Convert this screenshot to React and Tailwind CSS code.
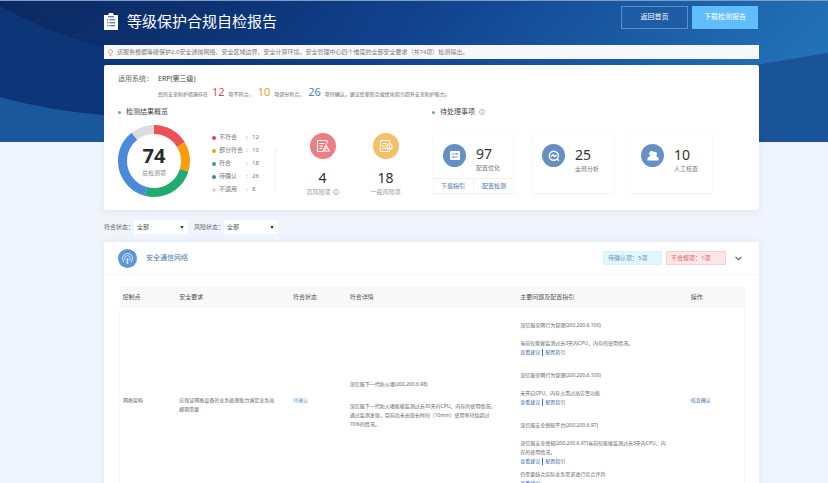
import React from "react";

const legend = [
  { label: "不符合", value: 12, color: "#ea5256" },
  { label: "部分符合", value: 10, color: "#f99d0c" },
  { label: "符合", value: 18, color: "#22ab70" },
  { label: "待确认", value: 26, color: "#4a8ad8" },
  { label: "不适用", value: 8, color: "#dcdcde" },
];

const dots = ["bg-[#d9484f]", "bg-[#f0a015]", "bg-[#2aa775]", "bg-[#3f80b4]", "bg-[#d5dae2]"];

function Backdrop() {
  return (
    <svg className="absolute inset-0 h-full w-full" viewBox="0 0 828 142" preserveAspectRatio="none" aria-hidden="true">
      <defs>
        <linearGradient id="sky" x1="0" x2="1" y1="0" y2="0.15">
          <stop offset="0" stopColor="#0b2a62" />
          <stop offset="0.2" stopColor="#0c2f6d" />
          <stop offset="0.5" stopColor="#11418d" />
          <stop offset="0.78" stopColor="#1a5ba4" />
          <stop offset="1" stopColor="#2270b6" />
        </linearGradient>
      </defs>
      <rect width="828" height="142" fill="url(#sky)" />
      <path d="M0 5C30 22 66 37 104 46L230 66V142H0Z" fill="#0d3679" />
      <path d="M0 97C34 106 68 112 104 115L240 122V142H0Z" fill="#1b589b" />
      <path d="M700 74L759 64L828 52V142H700Z" fill="#1a5498" />
    </svg>
  );
}

function ClipboardIcon() {
  return (
    <svg width="14" height="17" viewBox="0 0 14 17" aria-hidden="true">
      <path d="M0 2H4.500V1.200A1.200 1.200 0 0 1 5.700 0H8.300A1.200 1.200 0 0 1 9.500 1.200V2H14V17H0Z" fill="#fff" />
      <path d="M4 3.800H10M3 6.800H4.200M5.500 6.800H11M3 9.800H4.200M5.500 9.800H11M3 12.800H4.200M5.500 12.800H11" stroke="#274a82" strokeWidth="1" />
    </svg>
  );
}

function Info() {
  return (
    <svg width="6" height="6" viewBox="0 0 12 12" fill="none" stroke="#7d8794" aria-hidden="true">
      <circle cx="6" cy="6" r="5.200" />
      <path d="M6 5V9M6 2.800V4" strokeWidth="1.300" />
    </svg>
  );
}

function Donut() {
  const total = legend.reduce((s, d) => s + d.value, 0);
  const c = 2 * Math.PI * 31.5;
  let start = 0;
  return (
    <div className="relative h-[72px] w-[72px] shrink-0">
      <svg width="72" height="72" viewBox="0 0 72 72" aria-hidden="true">
        <g transform="rotate(-90 36 36)" fill="none" strokeWidth="9">
          {legend.map((d) => {
            const len = (d.value / total) * c;
            const arc = (
              <circle key={d.label} cx="36" cy="36" r="31.5" stroke={d.color} strokeDasharray={`${len} ${c - len}`} strokeDashoffset={-start} />
            );
            start += len;
            return arc;
          })}
        </g>
      </svg>
      <div className="absolute inset-0 flex flex-col items-center pt-[18px]">
        <span className="text-[20px] leading-[26px] font-bold text-[#2b2b2b]">74</span>
        <span className="text-[6px] leading-[9px] text-[#8a8a8a]">总检测项</span>
      </div>
    </div>
  );
}

function SectionTitle({ children, info }) {
  return (
    <h2 className="flex h-[10px] items-center text-[7px] leading-[10px] text-[#444]">
      <span className="mr-[5px] h-[3px] w-[3px] rounded-full bg-[#5ba6cf]" />
      {children}
      {info && <span className="ml-1"><Info /></span>}
    </h2>
  );
}

function Risk({ tone, value, label, info, children }) {
  return (
    <div className="flex w-[63px] flex-col items-center">
      <span className={`flex h-[26px] w-[26px] items-center justify-center rounded-full ${tone}`}>{children}</span>
      <span className="mt-[9px] text-[14px] leading-[20px] text-[#333]">{value}</span>
      <span className="flex items-center gap-[2px] text-[6px] leading-[8px] text-[#999]">
        {label}
        {info && <Info />}
      </span>
    </div>
  );
}

function Task({ value, label, links, children }) {
  return (
    <div className="flex h-[63px] w-[83px] flex-col border border-[#fafafb] border-b-[#f1f2f4]">
      <div className="flex h-[47px] items-center pl-[10px]">
        <span className="flex h-[23px] w-[23px] shrink-0 items-center justify-center rounded-full bg-[#6690c2]">{children}</span>
        <div className="ml-[10px] flex flex-col pt-[8px]">
          <span className="text-[14px] leading-[18px] text-[#333]">{value}</span>
          <span className="text-[6px] leading-[10px] text-[#777]">{label}</span>
        </div>
      </div>
      {links && (
        <div className="flex flex-1 items-center border-t border-[#eff1f4] text-center text-[6px] leading-[14px] text-[#4674a8]">
          {links.map((l, i) => (
            <a key={l} href="#" className={i ? "flex-1 border-l border-[#eff1f4]" : "flex-1"}>{l}</a>
          ))}
        </div>
      )}
    </div>
  );
}

function Filter({ id, label }) {
  return (
    <div className="flex items-center">
      <label htmlFor={id} className="w-[30px] text-[6px] whitespace-nowrap text-[#666]">{label}</label>
      <div className="relative">
        <select id={id} className="block h-[14px] w-[54px] appearance-none bg-white pl-[3px] text-[6px] leading-[14px] text-[#555] outline-none">
          <option>全部</option>
        </select>
        <svg className="pointer-events-none absolute top-[6px] right-[4px]" width="4" height="3" viewBox="0 0 4 3" aria-hidden="true">
          <path d="M0.300 0H3.700L2 3Z" fill="#333" />
        </svg>
      </div>
    </div>
  );
}

function Links({ only }) {
  return (
    <p className="flex h-[9px] items-center text-[#3e6eb0]">
      <a href="#">查看建议</a>
      {!only && <span className="mx-[2px] h-[7px] w-px bg-[#3e6eb0]" />}
      {!only && <a href="#">配置指引</a>}
    </p>
  );
}

function Finding({ title, children }) {
  return (
    <div className="mb-[14px]">
      <p>{title}</p>
      <p className="mt-[9px]">{children}</p>
      <Links />
    </div>
  );
}

export default function App() {
  return (
    <div className="relative h-screen overflow-hidden bg-[#f0f4fd] font-['Noto_Sans','Noto_Sans_CJK_SC',sans-serif]">
      <div className="absolute inset-x-0 top-0 h-[142px] border-t border-[#7d9cc8]">
        <Backdrop />
      </div>
      <div className="relative pt-[6px] pr-[69px] pl-[104px]">
        <header className="flex items-start justify-between">
          <h1 className="flex h-[30px] items-center gap-[9px] text-[15px] leading-[20px] text-white">
            <ClipboardIcon />
            等级保护合规自检报告
          </h1>
          <div className="flex gap-1 pr-px text-[7px] text-white">
            <button className="h-[23px] w-[67px] border border-[#5c8dc6] bg-[#1f5ca6]">返回首页</button>
            <button className="h-[23px] w-[66px] bg-[#62befb]">下载检测报告</button>
          </div>
        </header>

        <p className="mt-[9px] flex h-[14px] items-center bg-[#f7f8fc] pl-[4px] text-[6px] whitespace-nowrap text-[#808080]">
          <svg className="mr-[4px]" width="5" height="7" viewBox="0 0 5 7" fill="none" stroke="#e58a8a" strokeWidth="0.8" aria-hidden="true">
            <path d="M1.600 4.400A2 2 0 1 1 3.400 4.400V5.200H1.600ZM1.700 6.500H3.300" />
          </svg>
          该服务根据等级保护2.0安全通信网络、安全区域边界、安全计算环境、安全管理中心四个维度的全部安全要求（共74项）检测得出。
        </p>

        <section className="mt-[6px] h-[145px] rounded-[2px] bg-white pt-[8px] pl-[14px] shadow-[0_2px_6px_rgba(40,70,140,0.08)]">
          <div className="flex text-[7px] leading-[12px] text-[#666]">
            <span className="w-[40px]">适用系统：</span>
            <span className="text-[#444]">ERP(第三级)</span>
          </div>
          <p className="ml-[40px] flex h-[14px] items-baseline text-[5px] leading-[14px] whitespace-nowrap text-[#666]">
            您的安全防护措施存在<b className="mx-1 text-[11px] font-normal text-[#d9485c]">12</b>
            项不符合，<b className="mx-1 text-[11px] font-normal text-[#e3a01d]">10</b>
            项部分符合，<b className="mx-1 text-[11px] font-normal text-[#4488c6]">26</b>
            项待确认，建议您参照合规优化指引提升安全防护能力。
          </p>

          <div className="mt-[8px] flex">
            <div className="w-[157px] shrink-0">
              <SectionTitle>检测结果概览</SectionTitle>
              <div className="mt-[8px] flex">
                <Donut />
                <ul className="mt-[6px] ml-[22px] text-[6px] leading-[13px] text-[#777]">
                  {legend.map((d, i) => (
                    <li key={d.label} className="flex items-center">
                      <span className={`mr-[3px] h-[4px] w-[4px] rounded-full ${dots[i]}`} />
                      <span className="w-[27px]">{d.label}</span>
                      <span className="w-[6px]">:</span>
                      <span>{d.value}</span>
                    </li>
                  ))}
                </ul>
              </div>
            </div>

            <div className="mt-[42px] h-[42px] w-px bg-[#f3f3f5]" />

            <div className="mt-[26px] ml-[15px] flex w-[141px] shrink-0">
              <Risk tone="bg-[#ec7f84]" value="4" label="高风险项" info>
                <svg width="14" height="14" viewBox="0 0 14 14" fill="none" stroke="#fff" strokeWidth="1.1" aria-hidden="true">
                  <path d="M11 4.500V1.500H1.500V12.500H7M3.500 4.500H8.500M3.500 7H7M3.500 9.500H6M10 6L13.200 12H7Z" />
                  <path d="M10 8.200V10.500" />
                </svg>
              </Risk>
              <Risk tone="bg-[#f6c069]" value="18" label="一般风险项">
                <svg width="14" height="14" viewBox="0 0 14 14" fill="none" stroke="#fff" strokeWidth="1.1" aria-hidden="true">
                  <path d="M11 3.500V1.500H1.500V12.500H10.500V11.500M3.500 4.500H7M3.500 7H6M3.500 9.500H7" />
                  <circle cx="10.400" cy="7.400" r="2.700" />
                  <path d="M10.400 6V8.800" />
                </svg>
              </Risk>
            </div>

            <div>
              <SectionTitle info>待处理事项</SectionTitle>
              <div className="mt-[14px] flex gap-[16px]">
                <Task value="97" label="配置优化" links={["下载指引", "配置检测"]}>
                  <svg width="10" height="9" viewBox="0 0 10 9" aria-hidden="true">
                    <rect width="10" height="9" rx="1" fill="#fff" />
                    <path d="M1.500 3H8.500M1.500 6H8.500M6.500 2V4M3.500 5V7" stroke="#6690c2" strokeWidth="0.8" />
                  </svg>
                </Task>
                <Task value="25" label="全局分析">
                  <svg width="12" height="12" viewBox="0 0 12 12" fill="none" stroke="#fff" strokeWidth="1.4" aria-hidden="true">
                    <circle cx="5.800" cy="5.800" r="4.500" />
                    <path d="M9 9L11 10.800M3 6.500L5 4.800L6.500 6.500L8.600 5" />
                  </svg>
                </Task>
                <Task value="10" label="人工核查">
                  <svg width="12" height="10" viewBox="0 0 12 10" fill="#fff" aria-hidden="true">
                    <circle cx="4.700" cy="2.600" r="2.500" />
                    <circle cx="7.800" cy="3" r="2.200" />
                    <path d="M0.500 9.500V7.500Q1 5.200 4 5H8Q11 5.200 11.500 7.500V9.500Z" />
                  </svg>
                </Task>
              </div>
            </div>
          </div>
        </section>

        <div className="mt-[10px] flex gap-[6px]">
          <Filter id="match" label="符合状态：" />
          <Filter id="risk" label="风险状态：" />
        </div>

        <section className="mt-[8px] bg-white shadow-[0_0_6px_rgba(40,70,140,0.08)]">
          <div className="flex h-[33px] items-center border-b border-[#f6f7f9] pr-[17px] pl-[14px]">
            <svg width="19" height="19" viewBox="0 0 19 19" fill="none" stroke="#d8e8fb" aria-hidden="true">
              <circle cx="9.500" cy="9.500" r="9.500" fill="#5b97d9" stroke="none" />
              <path d="M6.200 13.300A5 5 0 1 1 12.800 13.300M7.400 11.300A2.800 2.800 0 1 1 11.600 11.300" />
              <path d="M9.500 9V15" strokeWidth="1.500" />
            </svg>
            <h2 className="ml-[9px] text-[7px] text-[#4c7da6]">安全通信网络</h2>
            <div className="ml-auto flex items-center gap-1 text-[6px] leading-[12px]">
              <span className="w-[59px] border border-[#def1fa] bg-[#e3f5fd] pl-[4px] text-[#5b9cc0]">待确认项：5项</span>
              <span className="w-[60px] border border-[#f6cfd0] bg-[#fde6e6] pl-[4px] text-[#d66a6a]">不合规项：1项</span>
            </div>
            <button aria-label="收起" className="ml-[9px]">
              <svg width="7" height="5" viewBox="0 0 7 5" fill="none" stroke="#555" strokeWidth="1.1" aria-hidden="true">
                <path d="M0.500 0.800L3.500 3.800L6.500 0.800" />
              </svg>
            </button>
          </div>

          <div className="pt-[12px] pr-[14px] pl-[15px]">
            <table className="w-full table-fixed text-left text-[5px] leading-[9px] text-[#666]">
              <colgroup>
                <col className="w-1/11" />
                <col className="w-2/11" />
                <col className="w-1/11" />
                <col className="w-3/11" />
                <col className="w-3/11" />
                <col className="w-1/11" />
              </colgroup>
              <thead>
                <tr className="h-[21px] bg-[#f8f8f9] text-[6px] text-[#555]">
                  {["控制点", "安全要求", "符合状态", "符合详情", "主要问题及配置指引", "操作"].map((h) => (
                    <th key={h} className="px-[3px] font-normal">{h}</th>
                  ))}
                </tr>
              </thead>
              <tbody>
                <tr className="border-x border-b border-[#f7f8f9]">
                  <td className="px-[3px] pb-[9px]">网络架构</td>
                  <td className="px-[3px]">应保证网络设备的业务处理能力满足业务高<br />峰期需要</td>
                  <td className="px-[3px] pb-[9px] text-[#5f9bd0]">待确认</td>
                  <td className="px-[3px]">
                    <p className="mb-[13px]">深信服下一代防火墙(200.200.6.98)</p>
                    <p>
                      深信服下一代防火墙能够监测过去30天内CPU、内存的使用情况。
                      <br />
                      通过监测发现，目前尚未出现长时间（10min）使用率持续超过
                      <br />
                      70%的情况。
                    </p>
                  </td>
                  <td className="px-[3px] py-[13px]">
                    <Finding title="深信服全网行为管理(200.200.6.100)">当前仅能够监测过去3天内CPU、内存的使用情况。</Finding>
                    <Finding title="深信服全网行为管理(200.200.6.100)">未开启CPU、内存占用过高告警功能</Finding>
                    <div>
                      <p>深信服安全感知平台(200.200.6.97)</p>
                      <p className="mt-[9px]">
                        深信服安全感知(200.200.6.97)当前仅能够监测过去3天内CPU、内
                        <br />
                        存的使用情况。
                      </p>
                      <Links />
                      <p className="mt-1">仍需要结合实际业务需求进行综合评判</p>
                      <Links only />
                    </div>
                  </td>
                  <td className="px-[3px] pb-[9px]">
                    <a href="#" className="text-[#3e6eb0]">核查确认</a>
                  </td>
                </tr>
              </tbody>
            </table>
          </div>
        </section>
      </div>
    </div>
  );
}
